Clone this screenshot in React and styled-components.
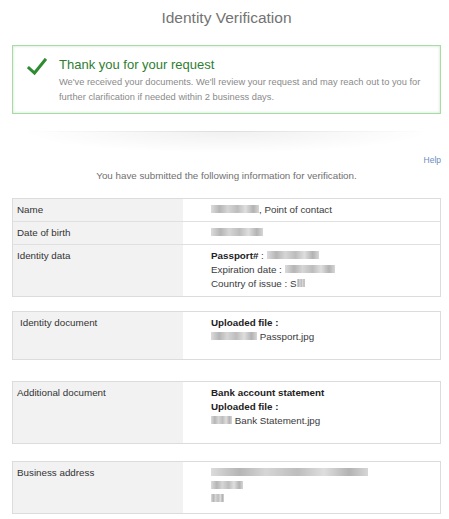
import React from 'react';
import styled, { createGlobalStyle } from 'styled-components';

const GlobalStyle = createGlobalStyle`
  html, body {
    margin: 0;
    padding: 0;
    background: #fff;
  }
  body {
    font-family: 'Liberation Sans', Arial, sans-serif;
    color: #333;
  }
`;

const Page = styled.div`
  width: 449px;
  padding: 0 8px 0 12px;
  box-sizing: border-box;
`;

const Title = styled.h1`
  margin: 0;
  padding-top: 8px;
  font-size: 15.5px;
  line-height: 20px;
  font-weight: normal;
  color: #737373;
  text-align: center;
`;

const SuccessBox = styled.div`
  margin-top: 17px;
  display: flex;
  gap: 12px;
  padding: 11px 10px 8px 14px;
  border: 1px solid #a9dba9;
  box-shadow: inset 0 0 3px rgba(90, 180, 90, 0.35);
  background: #fff;
`;

const CheckIcon = styled.svg`
  flex: none;
  width: 20px;
  height: 18px;
  margin-top: 1px;
`;

const SuccessText = styled.div`
  flex: 1;
`;

const SuccessTitle = styled.div`
  font-size: 13px;
  line-height: 16px;
  color: #2f7d32;
`;

const SuccessBody = styled.p`
  margin: 2px 0 0;
  font-size: 9.3px;
  line-height: 15px;
  color: #8a8a8a;
`;

const Divider = styled.div`
  margin: 17px 10px 0;
  height: 22px;
  background:
    linear-gradient(90deg, rgba(0,0,0,0), rgba(0,0,0,0.08) 50%, rgba(0,0,0,0)) top / 100% 1px no-repeat,
    radial-gradient(ellipse 50% 100% at 50% 0%, rgba(0, 0, 0, 0.06), rgba(0, 0, 0, 0) 100%);
`;

const HelpRow = styled.div`
  display: flex;
  justify-content: flex-end;
  margin-top: 1px;
`;

const HelpLink = styled.a`
  font-size: 8.5px;
  line-height: 12px;
  color: #6b8dbd;
  text-decoration: none;
`;

const Intro = styled.p`
  margin: 4px 0 0;
  font-size: 9.8px;
  line-height: 12px;
  color: #707070;
  text-align: center;
`;

const Table = styled.div`
  margin-top: ${(p) => p.$gap}px;
  border: 1px solid #dcdcdc;
  display: grid;
  grid-template-columns: 170px 1fr;
`;

const Label = styled.div`
  background: #f2f2f2;
  padding: ${(p) => `4px 6px ${p.$bottom || 4}px ${p.$indent || 4}px`};
  font-size: 9.8px;
  line-height: 14px;
  color: #333;
  border-top: ${(p) => (p.$first ? 'none' : '1px solid #e0e0e0')};
`;

const Value = styled.div`
  padding: ${(p) => `4px 8px ${p.$bottom || 4}px 28px`};
  font-size: 9.8px;
  line-height: 14px;
  color: #3a3a3a;
  border-top: ${(p) => (p.$first ? 'none' : '1px solid #e0e0e0')};
`;

const Line = styled.div`
  line-height: ${(p) => p.$lh || 14}px;
`;

const Strong = styled.b`
  font-weight: bold;
  color: #222;
`;

const Redacted = styled.span`
  display: inline-block;
  vertical-align: middle;
  width: ${(p) => p.$w}px;
  height: 8px;
  margin-top: -2px;
  background: linear-gradient(
    90deg,
    #d6d6d6 0%,
    #a9a9a9 18%,
    #cfcfcf 35%,
    #b2b2b2 55%,
    #d9d9d9 72%,
    #a6a6a6 88%,
    #d0d0d0 100%
  );
  filter: blur(0.7px);
  opacity: 0.85;
`;

function Check() {
  return (
    <CheckIcon viewBox="0 0 20 18">
      <polyline
        points="2,10 7.5,15 18,2"
        fill="none"
        stroke="#2e8b32"
        strokeWidth="3"
        strokeLinecap="square"
      />
    </CheckIcon>
  );
}

function App() {
  return (
    <>
      <GlobalStyle />
      <Page>
        <Title>Identity Verification</Title>

        <SuccessBox>
          <Check />
          <SuccessText>
            <SuccessTitle>Thank you for your request</SuccessTitle>
            <SuccessBody>
              We've received your documents. We'll review your request and may
              reach out to you for further clarification if needed within 2
              business days.
            </SuccessBody>
          </SuccessText>
        </SuccessBox>

        <Divider />

        <HelpRow>
          <HelpLink href="#">Help</HelpLink>
        </HelpRow>
        <Intro>You have submitted the following information for verification.</Intro>

        <Table $gap={16}>
          <Label $first>Name</Label>
          <Value $first>
            <Redacted $w={48} />, Point of contact
          </Value>
          <Label>Date of birth</Label>
          <Value>
            <Redacted $w={52} />
          </Value>
          <Label $bottom={5}>Identity data</Label>
          <Value $bottom={5}>
            <Line>
              <Strong>Passport#</Strong> : <Redacted $w={52} />
            </Line>
            <Line>
              Expiration date : <Redacted $w={50} />
            </Line>
            <Line>
              Country of issue : S<Redacted $w={8} />
            </Line>
          </Value>
        </Table>

        <Table $gap={14}>
          <Label $first $indent={7} $bottom={15}>Identity document</Label>
          <Value $first $bottom={15}>
            <Line>
              <Strong>Uploaded file :</Strong>
            </Line>
            <Line>
              <Redacted $w={46} /> Passport.jpg
            </Line>
          </Value>
        </Table>

        <Table $gap={21}>
          <Label $first $bottom={15}>Additional document</Label>
          <Value $first $bottom={15}>
            <Line>
              <Strong>Bank account statement</Strong>
            </Line>
            <Line>
              <Strong>Uploaded file :</Strong>
            </Line>
            <Line>
              <Redacted $w={21} /> Bank Statement.jpg
            </Line>
          </Value>
        </Table>

        <Table $gap={17}>
          <Label $first $bottom={8}>Business address</Label>
          <Value $first $bottom={8}>
            <Line $lh={13}>
              <Redacted $w={157} />
            </Line>
            <Line $lh={13}>
              <Redacted $w={32} />
            </Line>
            <Line $lh={13}>
              <Redacted $w={13} />
            </Line>
          </Value>
        </Table>
      </Page>
    </>
  );
}

export default App;
